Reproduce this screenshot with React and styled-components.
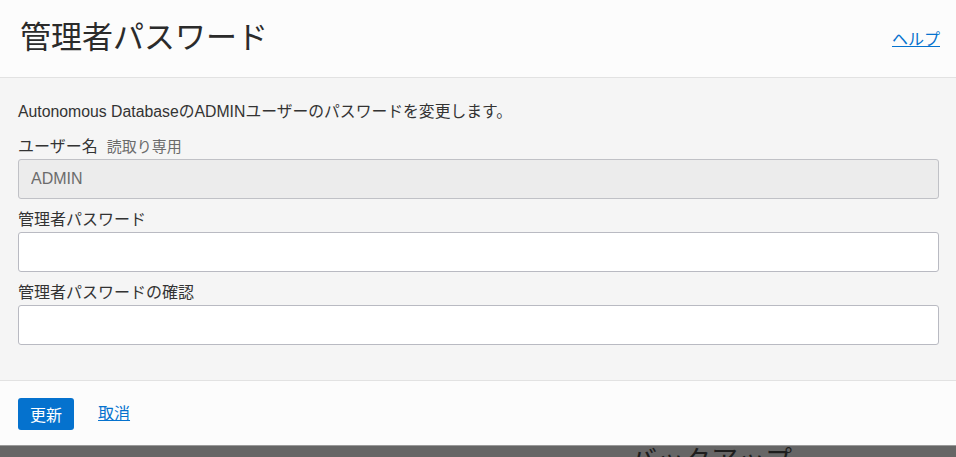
import React from 'react';
import styled, { createGlobalStyle } from 'styled-components';

const GlobalStyle = createGlobalStyle`
  html, body {
    margin: 0;
    padding: 0;
    height: 457px;
    overflow: hidden;
    background: #666666;
  }
  body {
    font-family: "Liberation Sans", "Noto Sans CJK JP", sans-serif;
    color: #333333;
  }
`;

const Page = styled.div`
  width: 956px;
  height: 457px;
  display: flex;
  flex-direction: column;
  overflow: hidden;
`;

const Dialog = styled.section`
  background: #fcfcfc;
  display: flex;
  flex-direction: column;
  border-bottom: 1px solid #9a9a9a;
`;

const Header = styled.header`
  height: 77px;
  border-bottom: 1px solid #e2e2e2;
  display: flex;
  align-items: center;
  justify-content: space-between;
  padding: 0 16px 0 20px;
`;

const Title = styled.h1`
  margin: 0;
  font-size: 31px;
  font-weight: normal;
  color: #2b2b2b;
  line-height: 1;
  padding-bottom: 2px;
`;

const Link = styled.a`
  font-size: ${(p) => p.$size || 16}px;
  color: #0572ce;
  text-decoration: underline;
  cursor: pointer;
  line-height: 1;
  padding-top: ${(p) => p.$nudge || 0}px;
`;

const Body = styled.div`
  background: #f5f5f5;
  padding: 24px 17px 35px 18px;
  display: flex;
  flex-direction: column;
  gap: 11px;
`;

const Description = styled.p`
  margin: 0 0 4px;
  font-size: 15.8px;
  line-height: 20px;
  color: #333333;
`;

const Field = styled.div`
  display: flex;
  flex-direction: column;
  gap: 2px;
`;

const Label = styled.label`
  font-size: 16px;
  line-height: 20px;
  color: #333333;
  display: flex;
  align-items: baseline;
  gap: 9px;
`;

const Hint = styled.span`
  font-size: 15px;
  color: #6b6b6b;
`;

const Input = styled.input`
  box-sizing: border-box;
  height: 40px;
  width: 100%;
  margin: 0;
  padding: 0 12px;
  border: 1px solid ${(p) => (p.readOnly ? '#c0c1c6' : '#b9bac2')};
  border-radius: 3px;
  background: ${(p) => (p.readOnly ? '#ececec' : '#ffffff')};
  color: #6b6b6b;
  font-family: inherit;
  font-size: 16px;
  outline: none;
`;

const Footer = styled.footer`
  height: 65px;
  border-top: 1px solid #e2e2e2;
  box-sizing: border-box;
  display: flex;
  align-items: center;
  gap: 24px;
  padding: 1px 18px 0;
`;

const PrimaryButton = styled.button`
  height: 32px;
  padding: 0 12px;
  border: none;
  border-radius: 3px;
  background: #0572ce;
  color: #ffffff;
  font-family: inherit;
  font-size: 16px;
  cursor: pointer;
`;

const Backdrop = styled.div`
  flex: 1;
  background: #666666;
  overflow: hidden;
  padding-left: 630px;
`;

const BackgroundText = styled.div`
  font-size: 27px;
  line-height: 27px;
  color: #1e1e1e;
  margin-top: 2px;
  white-space: nowrap;
`;

export default function App() {
  return (
    <>
      <GlobalStyle />
      <Page>
        <Dialog>
          <Header>
            <Title>管理者パスワード</Title>
            <Link $nudge={3}>ヘルプ</Link>
          </Header>
          <Body>
            <Description>
              Autonomous DatabaseのADMINユーザーのパスワードを変更します。
            </Description>
            <Field>
              <Label>
                ユーザー名<Hint>読取り専用</Hint>
              </Label>
              <Input readOnly value="ADMIN" />
            </Field>
            <Field>
              <Label>管理者パスワード</Label>
              <Input type="password" />
            </Field>
            <Field>
              <Label>管理者パスワードの確認</Label>
              <Input type="password" />
            </Field>
          </Body>
          <Footer>
            <PrimaryButton>更新</PrimaryButton>
            <Link>取消</Link>
          </Footer>
        </Dialog>
        <Backdrop>
          <BackgroundText>バックアップ</BackgroundText>
        </Backdrop>
      </Page>
    </>
  );
}
